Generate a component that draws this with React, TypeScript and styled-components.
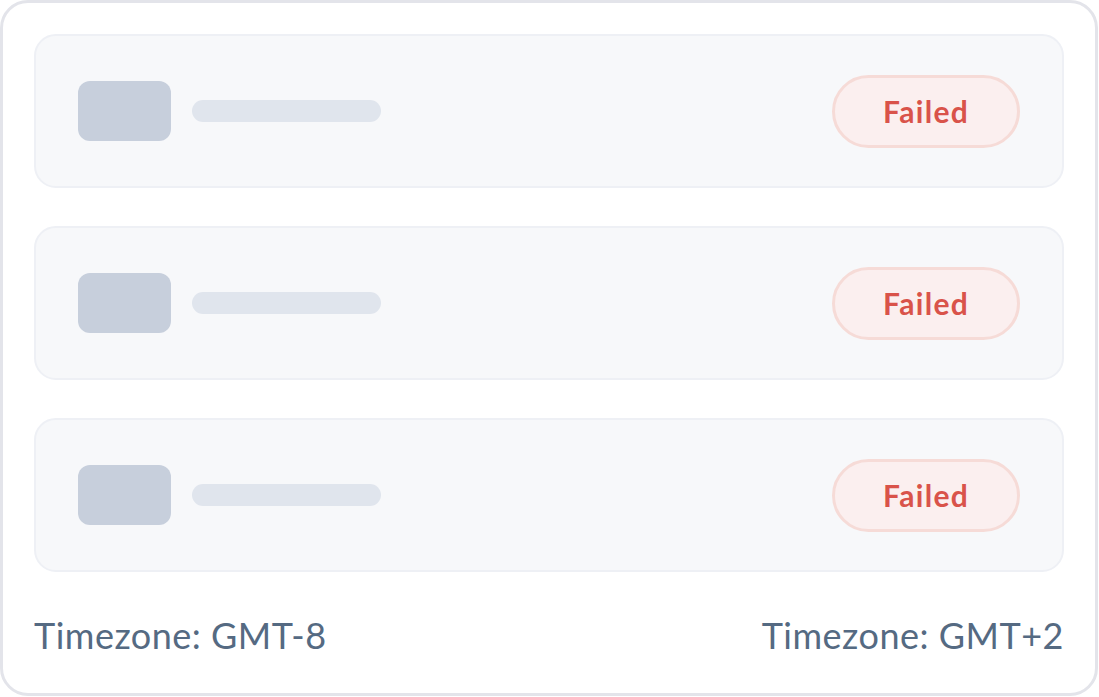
import React from 'react';
import styled, { createGlobalStyle } from 'styled-components';

type Job = { id: number; status: string };

const jobs: Job[] = [
  { id: 1, status: 'Failed' },
  { id: 2, status: 'Failed' },
  { id: 3, status: 'Failed' },
];

const App: React.FC = () => (
  <>
    <GlobalStyle />
    <Frame>
      <List>
        {jobs.map((job) => (
          <Card key={job.id}>
            <Avatar />
            <LineBar />
            <Badge>{job.status}</Badge>
          </Card>
        ))}
      </List>
      <Footer>
        <Zone>Timezone: GMT-8</Zone>
        <Zone>Timezone: GMT+2</Zone>
      </Footer>
    </Frame>
  </>
);

export default App;

const GlobalStyle = createGlobalStyle`
  html, body {
    margin: 0;
    padding: 0;
    background: #ffffff;
  }
  body {
    font-family: Lato, "Open Sans", sans-serif;
  }
`;

const Frame = styled.div`
  box-sizing: border-box;
  width: 1098px;
  height: 696px;
  border: 3px solid #e3e4ea;
  border-radius: 28px;
  background: #ffffff;
  padding: 31px 31px 0;
  display: flex;
  flex-direction: column;
`;

const List = styled.div`
  display: flex;
  flex-direction: column;
  gap: 38px;
`;

const Card = styled.div`
  box-sizing: border-box;
  height: 154px;
  border: 2px solid #eef0f5;
  border-radius: 22px;
  background: #f7f8fa;
  display: flex;
  align-items: center;
  padding: 0 42px;
`;

const Avatar = styled.div`
  width: 93px;
  height: 60px;
  border-radius: 12px;
  background: #c7cfdc;
  flex-shrink: 0;
`;

const LineBar = styled.div`
  width: 189px;
  height: 22px;
  border-radius: 11px;
  background: #e0e5ed;
  margin-left: 21px;
`;

const Badge = styled.div`
  box-sizing: border-box;
  margin-left: auto;
  width: 188px;
  height: 73px;
  border: 3px solid #f6dbd7;
  border-radius: 37px;
  background: #fbefef;
  color: #d9534a;
  font-size: 30px;
  font-weight: 700;
  letter-spacing: 1.3px;
  display: flex;
  align-items: center;
  justify-content: center;
`;

const Footer = styled.div`
  display: flex;
  justify-content: space-between;
  align-items: center;
  margin-top: 42px;
`;

const Zone = styled.span`
  color: #556a82;
  font-size: 36px;
  line-height: 42px;
  font-weight: 400;
  letter-spacing: 0.5px;
`;
